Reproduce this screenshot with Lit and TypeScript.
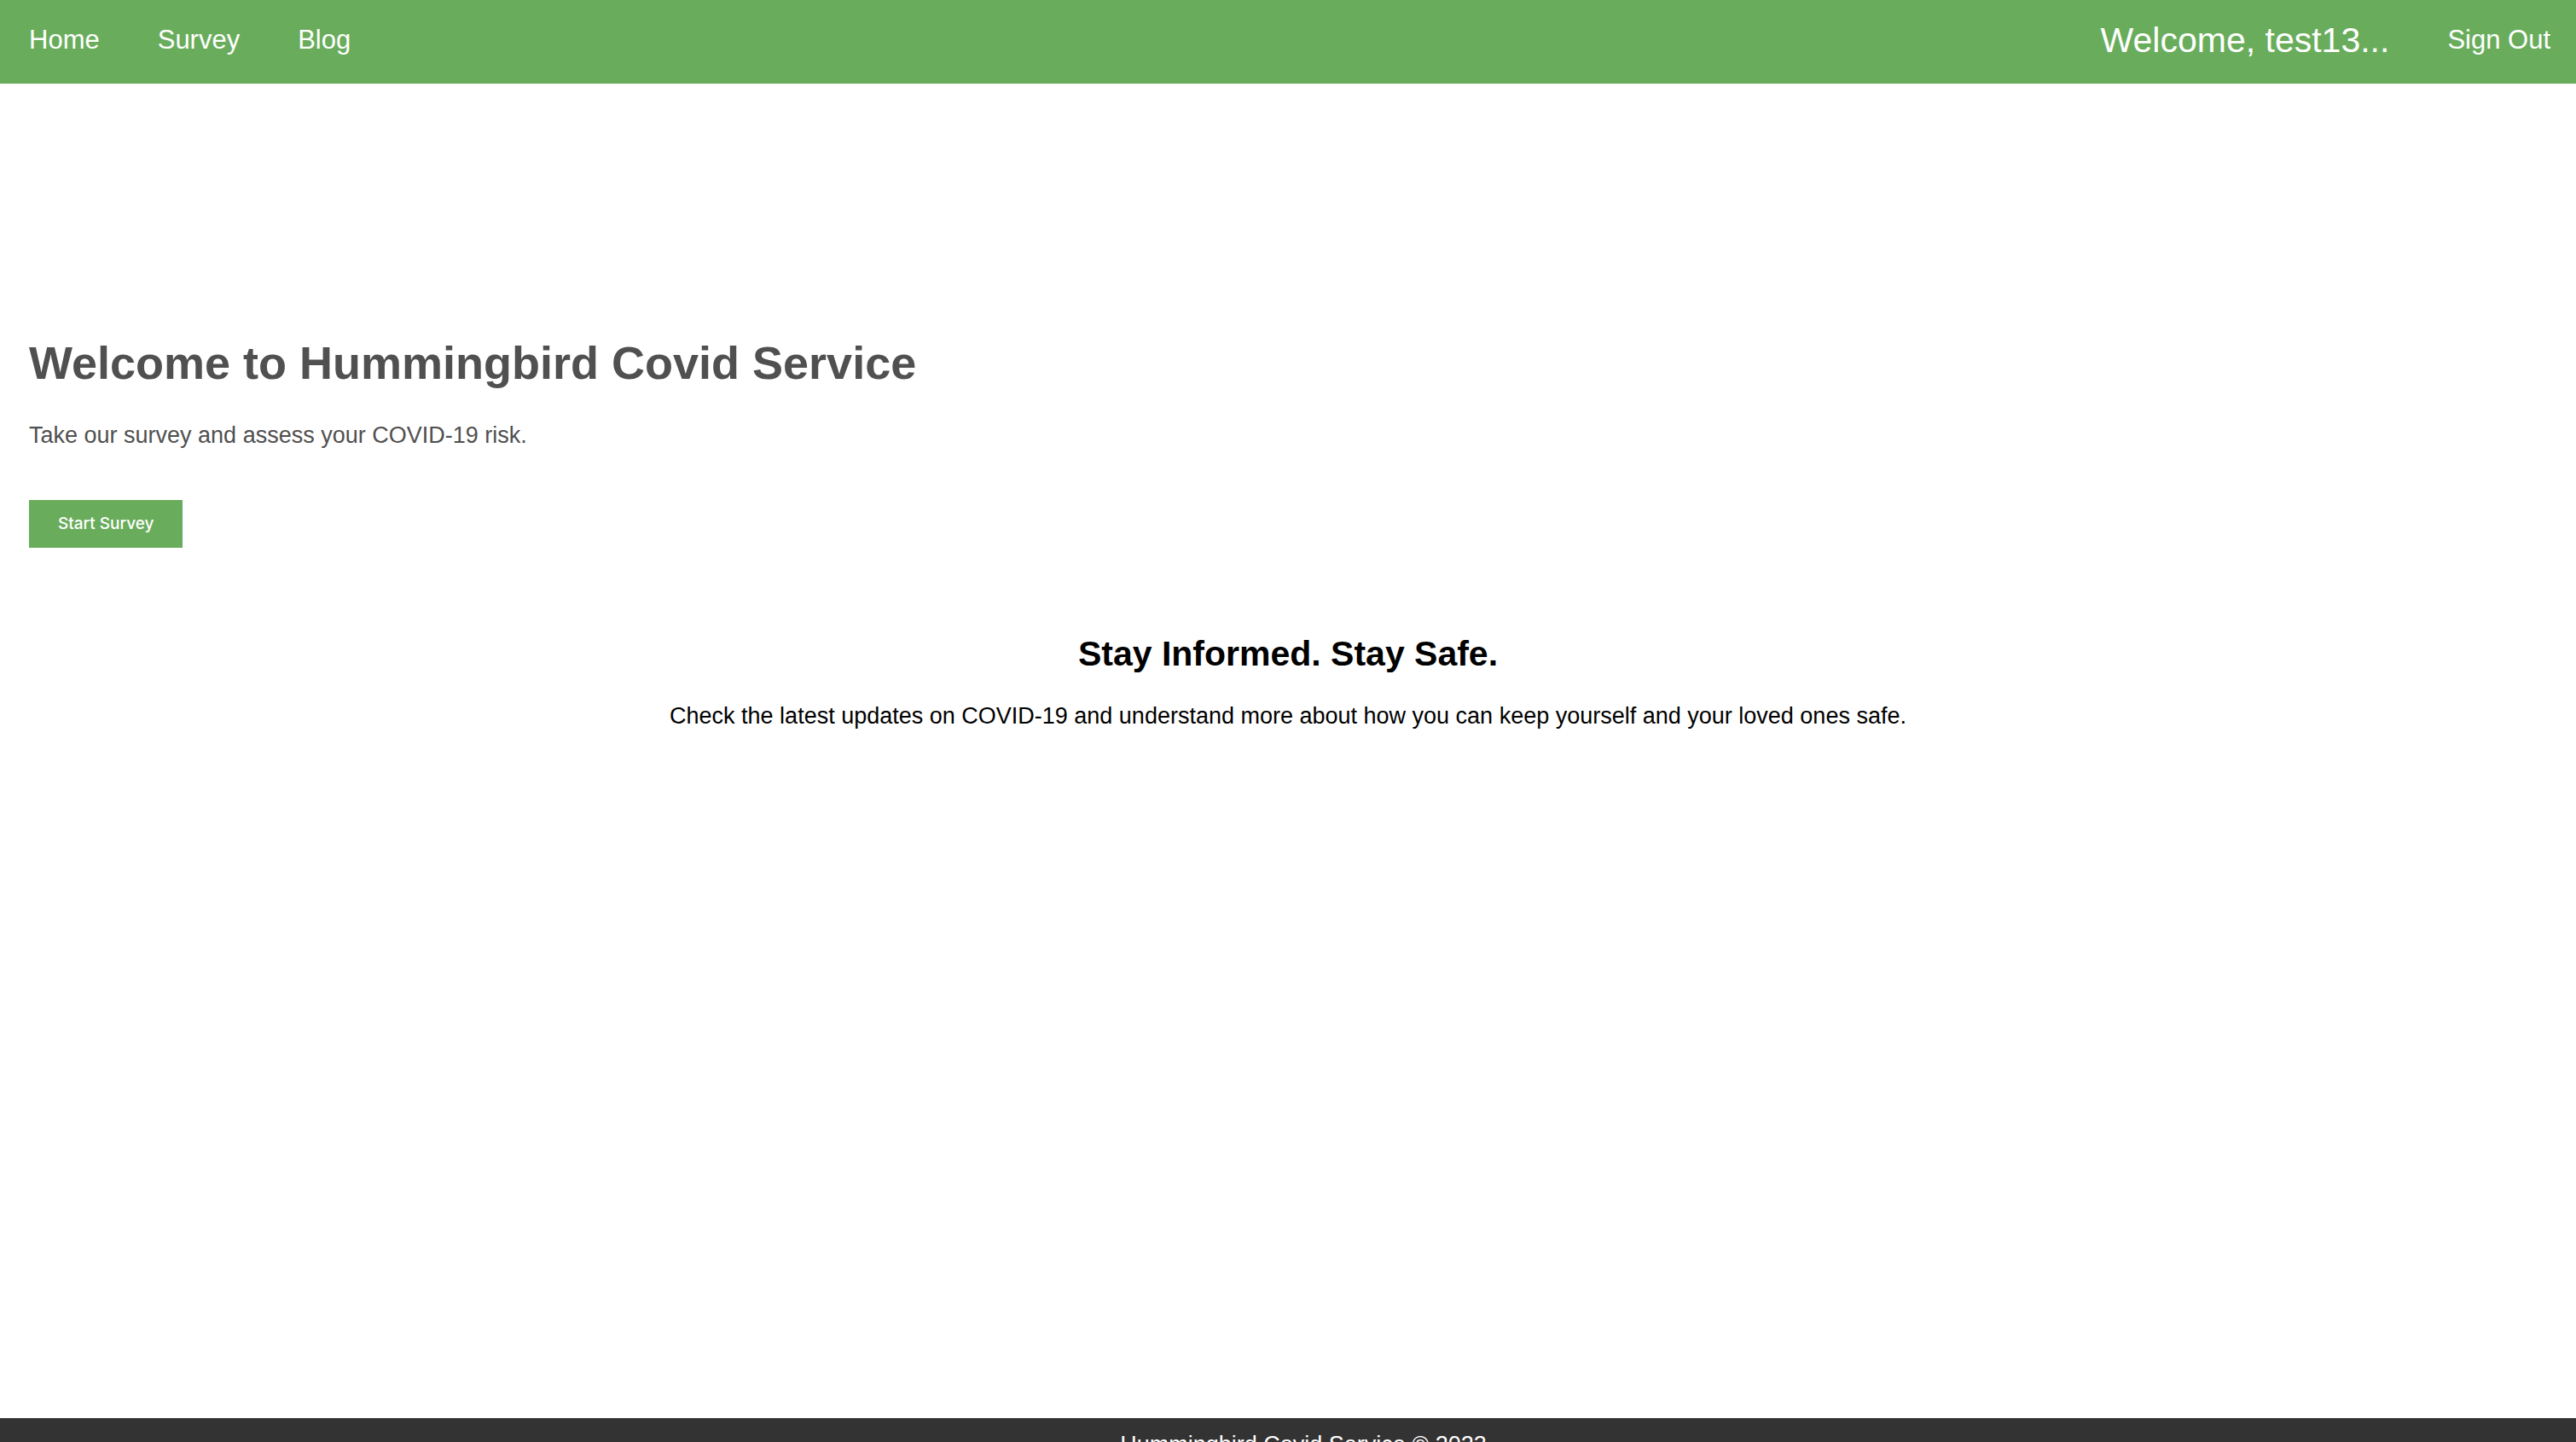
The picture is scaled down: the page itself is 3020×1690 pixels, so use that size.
import { LitElement, html, css } from "lit";
import { customElement, property } from "lit/decorators.js";

@customElement("site-header")
class SiteHeader extends LitElement {
  @property() user = "";

  static styles = css`
    :host {
      display: block;
    }
    .bar {
      display: flex;
      justify-content: space-between;
      align-items: center;
      padding: 22px 30px 26px 34px;
      background: #69ad5c;
      color: #fff;
      line-height: 50px;
    }
    .group {
      display: flex;
      align-items: center;
      gap: 68px;
    }
    .link {
      color: inherit;
      font-size: 31px;
      text-decoration: none;
    }
    .greeting {
      font-size: 41px;
    }
  `;

  render() {
    return html`
      <header class="bar">
        <nav class="group">
          <a class="link" href="#home">Home</a>
          <a class="link" href="#survey">Survey</a>
          <a class="link" href="#blog">Blog</a>
        </nav>
        <div class="group">
          <span class="greeting">Welcome, ${this.user}</span>
          <a class="link" href="#sign-out">Sign Out</a>
        </div>
      </header>
    `;
  }
}

@customElement("app-root")
class AppRoot extends LitElement {
  static styles = css`
    :host {
      display: flex;
      flex-direction: column;
      height: 100vh;
      overflow: hidden;
      background: #fff;
      color: #000;
      font-family: "Liberation Sans", Arial, sans-serif;
      font-size: 27px;
      line-height: 42px;
    }
    .content {
      flex: 1 0 auto;
    }
    .title,
    .subtitle,
    .text {
      margin: 0;
    }
    .hero {
      padding: 285px 34px 0;
      color: #505050;
    }
    .title {
      font-size: 54px;
      line-height: 84px;
    }
    .hero .text {
      padding: 22px 0 55px;
    }
    .start {
      display: block;
      padding: 0 34px;
      border: 0;
      background: #69ad5c;
      color: #fff;
      font-family: Inter, sans-serif;
      font-size: 19px;
      font-weight: 500;
      line-height: 56px;
    }
    .info {
      padding: 92px 34px 0;
      text-align: center;
    }
    .subtitle {
      font-size: 41px;
      line-height: 64px;
    }
    .info .text {
      padding-top: 20px;
    }
    .footer {
      flex: none;
      height: 28px;
      padding: 10px 0 0 36px;
      box-sizing: border-box;
      background: #333;
      color: #fff;
      text-align: center;
    }
  `;

  render() {
    return html`
      <site-header user="test13..."></site-header>
      <main class="content">
        <section class="hero">
          <h1 class="title">Welcome to Hummingbird Covid Service</h1>
          <p class="text">Take our survey and assess your COVID-19 risk.</p>
          <button class="start" type="button">Start Survey</button>
        </section>
        <section class="info">
          <h2 class="subtitle">Stay Informed. Stay Safe.</h2>
          <p class="text">
            Check the latest updates on COVID-19 and understand more about how you can keep yourself
            and your loved ones safe.
          </p>
        </section>
      </main>
      <footer class="footer">Hummingbird Covid Service © 2023</footer>
    `;
  }
}
